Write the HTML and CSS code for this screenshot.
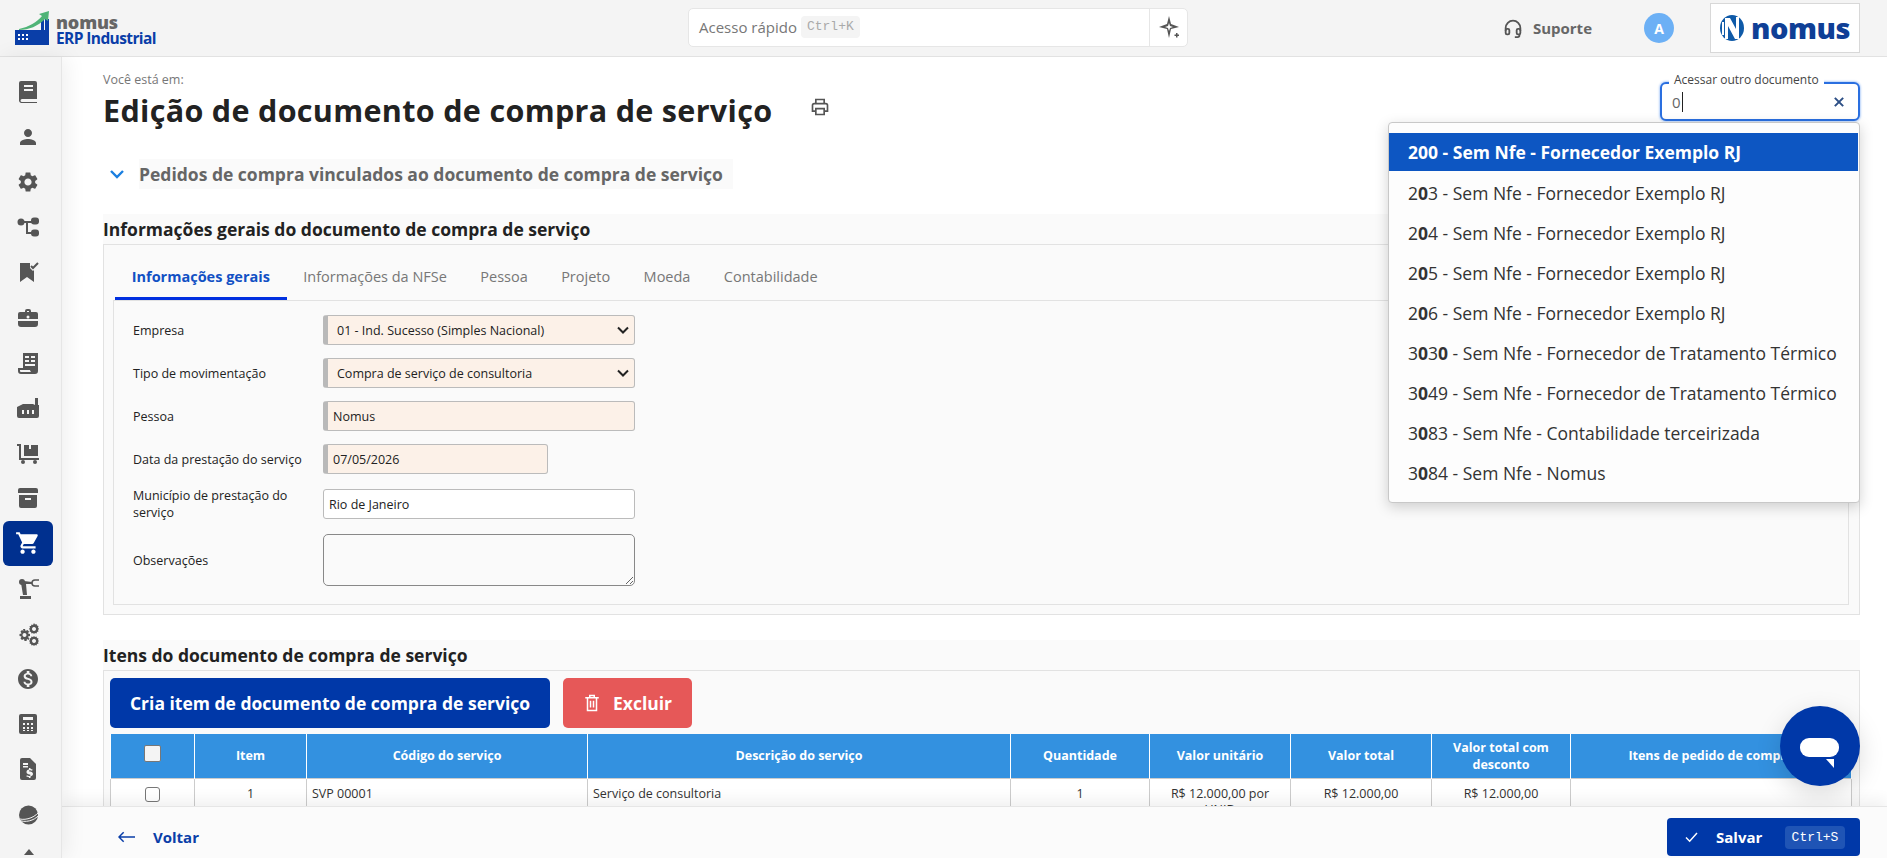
FILE: index.html
```html
<!DOCTYPE html>
<html lang="pt-BR">
<head>
  <meta charset="UTF-8" />
  <title>Edição de documento de compra de serviço</title>
  <link rel="stylesheet" href="styles.css">
</head>
<body>

  <!-- Top bar -->
  <header class="topbar">
    <div class="brand">
      <svg class="brand-mark" viewBox="0 0 34 34">
        <path fill="#0a3ea8" d="M0 19h26V8h3v11h1V8h4v26H0z"/>
        <path fill="#4fb477" d="M4 18C14 16 22 11 27 5l-3-2 10-3-1 10-3-2C23 15 14 19 4 19z"/>
        <path fill="#fff" d="M3 23h2v2H3zm4 0h2v2H7zm4 0h2v2h-2zM3 27h2v2H3zm4 0h2v2H7zm4 0h2v2h-2z"/>
      </svg>
      <div class="brand-text">
        <div class="brand-name">nomus</div>
        <div class="brand-sub">ERP Industrial</div>
      </div>
    </div>

    <div class="quick">
      <div class="quick-field">Acesso rápido <span class="kbd">Ctrl+K</span></div>
      <div class="quick-ai">
        <svg viewBox="0 0 24 24" width="24" height="24"><path fill="#555" d="M12 1l2 8 8 3-8 2-2 9-2-9-8-2 8-3z"/><path fill="#fff" d="M12 8l1 3 3 1-3 1-1 3-1-3-3-1 3-1z"/><path fill="#555" d="M19 18h1.500v1.500H22V21h-1.500v1.500H19V21h-1.500v-1.500H19z"/></svg>
      </div>
    </div>

    <div class="top-right">
      <div class="support">
        <svg viewBox="0 0 24 24" width="22" height="22" fill="none" stroke="#555" stroke-width="2"><path d="M4 15v-3a8 8 0 0 1 16 0v3"/><rect x="4" y="13" width="4" height="6" rx="1.500"/><rect x="16" y="13" width="4" height="6" rx="1.500"/><path d="M19 19v1a2 2 0 0 1-2 2h-3"/></svg>
        <span>Suporte</span>
      </div>
      <div class="avatar">A</div>
      <div class="client-logo">
        <svg viewBox="0 0 24 26" width="24" height="26">
          <ellipse cx="12" cy="13" rx="12" ry="13" fill="#0f5aa8"/>
          <path fill="#fff" d="M2 7h2v13H2zM5 3h5l6 11V2h3v22h-4L8 11v13H5z"/>
        </svg>
        <span>nomus</span>
      </div>
    </div>
  </header>

  <div class="shell">
    <!-- Side menu -->
    <nav class="sidebar">
      <a class="side-item"><svg viewBox="0 0 24 24"><path d="M5 1h14a2 2 0 0 1 2 2v16H6a1.500 1.500 0 0 0 0 3h15v1H5a3 3 0 0 1-2-2V3a2 2 0 0 1 2-2zm3 4v2h9V5zm0 4v2h9V9z" fill-rule="evenodd"/></svg></a>
      <a class="side-item"><svg viewBox="0 0 24 24"><path d="M12 12c2.200 0 4-1.800 4-4s-1.800-4-4-4-4 1.800-4 4 1.800 4 4 4zm0 2c-2.700 0-8 1.300-8 4v2h16v-2c0-2.700-5.300-4-8-4z"/></svg></a>
      <a class="side-item"><svg viewBox="0 0 24 24"><path d="M19.140 12.940c.04-.3.06-.61.06-.94 0-.32-.02-.64-.07-.94l2.030-1.580c.18-.14.23-.41.12-.61l-1.920-3.320c-.12-.22-.37-.29-.59-.22l-2.390.96c-.5-.38-1.030-.7-1.620-.94l-.36-2.540c-.04-.24-.24-.41-.48-.41h-3.840c-.24 0-.43.17-.47.41l-.36 2.540c-.59.24-1.130.57-1.620.94l-2.390-.96c-.22-.08-.47 0-.59.22L2.740 8.870c-.12.21-.08.47.12.61l2.030 1.580c-.05.3-.09.63-.09.94s.02.64.07.94l-2.030 1.580c-.18.14-.23.41-.12.61l1.920 3.320c.12.22.37.29.59.22l2.390-.96c.5.38 1.030.7 1.620.94l.36 2.540c.05.24.24.41.48.41h3.840c.24 0 .44-.17.47-.41l.36-2.540c.59-.24 1.130-.56 1.620-.94l2.390.96c.22.08.47 0 .59-.22l1.920-3.320c.12-.22.07-.47-.12-.61l-2.010-1.580zM12 15.600c-1.980 0-3.600-1.620-3.600-3.600s1.620-3.600 3.600-3.600 3.600 1.620 3.600 3.600-1.620 3.600-3.600 3.600z"/></svg></a>
      <a class="side-item"><svg viewBox="0 0 24 24"><circle cx="5" cy="7" r="3.500"/><rect x="15" y="2.500" width="8" height="7" rx="3"/><rect x="15" y="14.500" width="8" height="7" rx="3"/><path d="M8 6h8v2h-4v9h4v2h-6V8H8z"/></svg></a>
      <a class="side-item"><svg viewBox="0 0 24 24"><path d="M4 3h10v5l3 3 1-1v12l-7-5-7 5z"/><path d="M15 6l2 2 5-5" fill="none" stroke="#555" stroke-width="2"/></svg></a>
      <a class="side-item"><svg viewBox="0 0 24 24"><path fill-rule="evenodd" d="M9 6V5a2 2 0 0 1 2-2h2a2 2 0 0 1 2 2v1h5a2 2 0 0 1 2 2v5H2V8a2 2 0 0 1 2-2zm2 0h2V5h-2zM2 15h20v3a3 3 0 0 1-3 3H5a3 3 0 0 1-3-3z"/><circle cx="12" cy="11" r="1.500" fill="#f4f4f4"/></svg></a>
      <a class="side-item"><svg viewBox="0 0 24 24"><path fill-rule="evenodd" d="M7 2h15v18a3 3 0 0 1-3 3H5a3 3 0 0 1-3-3v-3h5zm2 3v2h4V5zm6 0v2h4V5zM9 9v2h4V9zm6 0v2h4V9zm-6 4v2h10v-2zM4 19v1a1 1 0 0 0 1 1h10a3 3 0 0 1-1-2z"/></svg></a>
      <a class="side-item"><svg viewBox="0 0 24 24"><path fill-rule="evenodd" d="M19 2h3v7h1v11a2 2 0 0 1-2 2H3a2 2 0 0 1-2-2V11l6-3h10l2 1zM6 14v4h2v-4zm5 0v4h2v-4zm5 0v4h2v-4z"/></svg></a>
      <a class="side-item"><svg viewBox="0 0 24 24"><path d="M1 3h4v14h18v2H3V5H1z"/><path d="M8 4h5v4h2V4h7v11H8z"/><circle cx="7" cy="21" r="2"/><circle cx="19" cy="21" r="2"/></svg></a>
      <a class="side-item"><svg viewBox="0 0 24 24"><path fill-rule="evenodd" d="M4 2h16a2 2 0 0 1 2 2v3H2V4a2 2 0 0 1 2-2zM3 9h18v11a2 2 0 0 1-2 2H5a2 2 0 0 1-2-2zm6 3v2h6v-2z"/></svg></a>
      <a class="side-item active"><svg viewBox="0 0 24 24"><path d="M7 18c-1.100 0-1.990.9-1.990 2S5.900 22 7 22s2-.9 2-2-.9-2-2-2zM1 2v2h2l3.600 7.590-1.350 2.450c-.16.28-.25.61-.25.96 0 1.100.9 2 2 2h12v-2H7.420c-.14 0-.25-.11-.25-.25l.03-.12.9-1.630h7.450c.75 0 1.410-.41 1.750-1.030l3.580-6.490c.08-.14.12-.31.12-.48 0-.55-.45-1-1-1H5.210l-.94-2H1zm16 16c-1.100 0-1.990.9-1.990 2s.89 2 1.990 2 2-.9 2-2-.9-2-2-2z"/></svg></a>
      <a class="side-item"><svg viewBox="0 0 24 24"><circle cx="6" cy="5" r="3"/><path d="M5 6l3-2 8 1v2l-6 0 1 11H7z"/><path d="M4 19h11v3H4z"/><path d="M23 3h-4a3 3 0 0 0 0 6h4" fill="none" stroke="#555" stroke-width="1.500"/></svg></a>
      <a class="side-item"><svg viewBox="0 0 24 24"><path fill-rule="evenodd" d="M7 7l2 0 .5 2 2-1 1.500 1.500-1 2 2 .5v2l-2 .5 1 2L13 18l-2-1-.5 2h-2L8 17l-2 1-1.500-1.500 1-2-2-.5v-2l2-.5-1-2L6 8l1.500 1zM8.500 11a2 2 0 1 0 .01 0z"/><path fill-rule="evenodd" d="M18 1l1 1.500 1.500-.5.5 1.500 1.500.5-.5 1.500L23 7l-1 1 .5 1.500L21 10l-.5 1.500-1.500-.5-1 1-1-1-1.500.5L15 10l-1.500-.5.5-1.500-1-1 1-1.500-.5-1.500L15 4l.5-1.500L17 3zm0 4a2 2 0 1 0 .01 0zM18 14l1 1 1.500-.5.5 1.500 1.500.5-.5 1.500 1 1-1 1 .5 1.500-1.500.5-.5 1.500-1.500-.5-1 1-1-1-1.500.5-.5-1.500-1.500-.5.5-1.500-1-1 1-1-.5-1.500 1.500-.5.5-1.500 1.500.5zm0 3a2 2 0 1 0 .01 0z"/></svg></a>
      <a class="side-item"><svg viewBox="0 0 24 24"><path d="M12 2C6.480 2 2 6.480 2 12s4.480 10 10 10 10-4.480 10-10S17.520 2 12 2zm1.410 16.090V20h-2.670v-1.930c-1.710-.36-3.160-1.460-3.270-3.400h1.960c.1 1.050.82 1.870 2.650 1.870 1.960 0 2.400-.98 2.400-1.590 0-.83-.44-1.610-2.670-2.140-2.480-.6-4.180-1.620-4.180-3.670 0-1.720 1.390-2.840 3.110-3.210V4h2.670v1.950c1.860.45 2.790 1.860 2.870 3.390H14.300c-.05-1.110-.64-1.870-2.220-1.870-1.500 0-2.400.68-2.400 1.640 0 .84.65 1.390 2.670 1.910s4.180 1.390 4.180 3.910c-.01 1.830-1.380 2.830-3.120 3.160z"/></svg></a>
      <a class="side-item"><svg viewBox="0 0 24 24"><path fill-rule="evenodd" d="M5 2h14a2 2 0 0 1 2 2v16a2 2 0 0 1-2 2H5a2 2 0 0 1-2-2V4a2 2 0 0 1 2-2zm2 3v3h10V5zm0 6v2h2v-2zm4 0v2h2v-2zm4 0v2h2v-2zm-8 4v2h2v-2zm4 0v2h2v-2zm4 0v2h2v-2zm-8 3v1h2v-1zm4 0v1h2v-1zm4 0v1h2v-1z"/></svg></a>
      <a class="side-item"><svg viewBox="0 0 24 24"><path fill-rule="evenodd" d="M6 1h8l6 6v14a2 2 0 0 1-2 2H6a2 2 0 0 1-2-2V3a2 2 0 0 1 2-2zm1 5v2h5V6zm0 3v1.500h5V9zm6 2v1.500c-1.500.3-2.500 1.200-2.500 2.500 0 2.800 4 2 4 3.200 0 1-2.500 1-3.500 0l-.8 1c.6.5 1.300.8 2.800 1V21h1.500v-1.500c1.500-.3 2.500-1.200 2.500-2.400 0-2.900-4-2-4-3.300 0-.8 2-.9 3-.1l.7-1c-.5-.4-1.200-.7-2.200-.8V11z"/></svg></a>
      <a class="side-item"><svg viewBox="0 0 24 24"><circle cx="12.500" cy="12" r="9.500"/><path d="M1 15c6 3 16 1 22-6M2 17c7 3 16 1 21-5" fill="none" stroke="#f4f4f4" stroke-width="1"/></svg></a>
      <div class="side-more"></div>
    </nav>

    <div class="main">
      <div class="content">
        <div class="crumb">Você está em:</div>
        <div class="title-row">
          <h1>Edição de documento de compra de serviço</h1>
          <svg viewBox="0 0 24 24" width="20" height="20" fill="none" stroke="#555" stroke-width="2"><path d="M7 8V3h10v5"/><path d="M7 17H3v-7a2 2 0 0 1 2-2h14a2 2 0 0 1 2 2v7h-4"/><path d="M7 14h10v7H7z"/></svg>
        </div>

        <div class="linked">
          <svg viewBox="0 0 14 10" width="14" height="10" fill="none" stroke="#1a7fe0" stroke-width="2.400"><path d="M1 2l6 6 6-6"/></svg>
          <div class="linked-title">Pedidos de compra vinculados ao documento de compra de serviço</div>
        </div>

        <h2 class="section-title first">Informações gerais do documento de compra de serviço</h2>
        <section class="panel">
          <div class="tabs">
            <a class="tab active">Informações gerais</a>
            <a class="tab">Informações da NFSe</a>
            <a class="tab">Pessoa</a>
            <a class="tab">Projeto</a>
            <a class="tab">Moeda</a>
            <a class="tab">Contabilidade</a>
          </div>
          <div class="form">
            <label>Empresa</label>
            <select class="req"><option>01 - Ind. Sucesso (Simples Nacional)</option></select>
            <label>Tipo de movimentação</label>
            <select class="req"><option>Compra de serviço de consultoria</option></select>
            <label>Pessoa</label>
            <input class="req" type="text" value="Nomus">
            <label>Data da prestação do serviço</label>
            <input class="req short" type="text" value="07/05/2026">
            <label>Município de prestação do serviço</label>
            <input type="text" value="Rio de Janeiro">
            <label>Observações</label>
            <textarea></textarea>
          </div>
        </section>

        <h2 class="section-title">Itens do documento de compra de serviço</h2>
        <section class="panel items">
          <div class="actions">
            <button class="btn btn-primary">Cria item de documento de compra de serviço</button>
            <button class="btn btn-danger">
              <svg viewBox="0 0 24 24" width="18" height="18" fill="none" stroke="#fff" stroke-width="2"><path d="M3 5h18M9 5V2h6v3M6 5v17h12V5M10 9v9M14 9v9"/></svg>
              Excluir
            </button>
          </div>
          <table class="grid">
            <colgroup>
              <col class="c1"><col class="c2"><col class="c3"><col class="c4"><col class="c5"><col class="c6"><col class="c7"><col class="c8"><col class="c9">
            </colgroup>
            <thead>
              <tr>
                <th><input type="checkbox" class="check check-head"></th>
                <th>Item</th>
                <th>Código do serviço</th>
                <th>Descrição do serviço</th>
                <th>Quantidade</th>
                <th>Valor unitário</th>
                <th>Valor total</th>
                <th>Valor total com desconto</th>
                <th>Itens de pedido de compra</th>
              </tr>
            </thead>
            <tbody>
              <tr>
                <td class="center"><input type="checkbox" class="check"></td>
                <td class="center">1</td>
                <td>SVP 00001</td>
                <td>Serviço de consultoria</td>
                <td class="center">1</td>
                <td class="center">R$ 12.000,00 por UNID</td>
                <td class="center">R$ 12.000,00</td>
                <td class="center">R$ 12.000,00</td>
                <td></td>
              </tr>
            </tbody>
          </table>
        </section>

        <!-- Document search with open suggestion list -->
        <div class="doc-search">
          <span class="doc-legend">Acessar outro documento</span>
          <span class="doc-value">0</span>
          <svg viewBox="0 0 12 12" width="10" height="10" fill="none" stroke="#2d4f86" stroke-width="2.400"><path d="M1 1l10 10M11 1L1 11"/></svg>
        </div>
        <ul class="suggest">
          <li class="current">200 - Sem Nfe - Fornecedor Exemplo RJ</li>
          <li>2<b>0</b>3 - Sem Nfe - Fornecedor Exemplo RJ</li>
          <li>2<b>0</b>4 - Sem Nfe - Fornecedor Exemplo RJ</li>
          <li>2<b>0</b>5 - Sem Nfe - Fornecedor Exemplo RJ</li>
          <li>2<b>0</b>6 - Sem Nfe - Fornecedor Exemplo RJ</li>
          <li>3<b>0</b>3<b>0</b> - Sem Nfe - Fornecedor de Tratamento Térmico</li>
          <li>3<b>0</b>49 - Sem Nfe - Fornecedor de Tratamento Térmico</li>
          <li>3<b>0</b>83 - Sem Nfe - Contabilidade terceirizada</li>
          <li>3<b>0</b>84 - Sem Nfe - Nomus</li>
        </ul>
      </div>

      <footer class="footer">
        <a class="back">
          <svg viewBox="0 0 18 12" width="17" height="12" fill="none" stroke="#0a3ea8" stroke-width="1.600"><path d="M18 6H1M6 1L1 6l5 5"/></svg>
          Voltar
        </a>
        <button class="btn-save">
          <svg viewBox="0 0 14 12" width="13" height="11" fill="none" stroke="#fff" stroke-width="1.600"><path d="M1 6l4 4 8-9"/></svg>
          <span>Salvar</span>
          <span class="kbd-save">Ctrl+S</span>
        </button>
      </footer>
    </div>
  </div>

  <!-- Chat bubble -->
  <div class="chat">
    <svg viewBox="0 0 40 30" width="40" height="30"><rect x="0" y="0" width="39" height="19" rx="9" fill="#fff"/><path d="M26 21h8v9z" fill="#fff"/></svg>
  </div>

</body>
</html>
```

FILE: styles.css
```css
* {
  box-sizing: border-box;
}

html, body {
  margin: 0;
  height: 100%;
  overflow: hidden;
}

body {
  display: flex;
  flex-direction: column;
  font-family: "Open Sans", "Noto Sans", sans-serif;
  color: #222;
  background: #fff;
}

/* top bar */
.topbar {
  height: 57px;
  flex: none;
  display: flex;
  align-items: center;
  justify-content: space-between;
  background: #f4f4f4;
  border-bottom: 1px solid #e2e2e2;
  padding: 0 27px 0 15px;
  position: relative;
}

.brand {
  display: flex;
  align-items: center;
  gap: 7px;
  width: 673px;
}

.brand-mark {
  width: 34px;
  height: 34px;
}

.brand-text {
  line-height: 16px;
  margin-top: 3px;
}

.brand-name {
  font-size: 18px;
  font-weight: 800;
  color: #666;
  letter-spacing: -0.2px;
}

.brand-sub {
  font-size: 15.5px;
  font-weight: 700;
  color: #0a3ea8;
  letter-spacing: -0.6px;
}

.quick {
  width: 500px;
  height: 39px;
  margin-top: -2px;
  display: flex;
  background: #fff;
  border: 1px solid #e6e6e6;
  border-radius: 5px;
}

.quick-field {
  flex: 1;
  display: flex;
  align-items: center;
  gap: 4px;
  padding-left: 10px;
  font-size: 15px;
  color: #777;
}

.kbd {
  font-family: "Liberation Mono", monospace;
  font-size: 13px;
  color: #aaa;
  background: #f4f4f4;
  border-radius: 4px;
  padding: 3px 6px;
  line-height: 16px;
}

.quick-ai {
  width: 38px;
  display: flex;
  align-items: center;
  justify-content: center;
  border-left: 1px solid #e6e6e6;
}

.top-right {
  display: flex;
  align-items: center;
  margin-left: auto;
}

.support {
  display: flex;
  align-items: center;
  gap: 9px;
  font-size: 15px;
  font-weight: 700;
  color: #666;
}

.avatar {
  width: 30px;
  height: 30px;
  margin: 0 36px 0 52px;
  border-radius: 50%;
  background: #6cb0f5;
  color: #fff;
  font-size: 14px;
  font-weight: 700;
  display: flex;
  align-items: center;
  justify-content: center;
}

.client-logo {
  width: 150px;
  height: 50px;
  background: #fff;
  border: 1px solid #d8d8d8;
  display: flex;
  align-items: center;
  justify-content: center;
  gap: 7px;
}

.client-logo span {
  font-size: 29px;
  font-weight: 800;
  color: #0f3f96;
  letter-spacing: -0.5px;
  line-height: 30px;
}

/* page shell */
.shell {
  flex: 1;
  display: flex;
  min-height: 0;
}

.sidebar {
  width: 62px;
  flex: none;
  background: #f4f4f4;
  border-right: 1px solid #e6e6e6;
  box-shadow: 4px 0 22px rgba(0, 0, 0, 0.07);
  padding: 12px 0 0 3px;
  position: relative;
  z-index: 2;
}

.side-item {
  width: 50px;
  height: 45.2px;
  display: flex;
  align-items: center;
  justify-content: center;
  border-radius: 6px;
}

.side-item svg {
  width: 24px;
  height: 24px;
  fill: #555;
}

.side-item.active {
  background: #00308f;
}

.side-item.active svg {
  width: 26px;
  height: 26px;
  fill: #fff;
}

.side-more {
  width: 0;
  height: 0;
  margin: 12px 0 0 21px;
  border: 5px solid transparent;
  border-top: 0;
  border-bottom: 6px solid #555;
}

.main {
  flex: 1;
  min-width: 0;
  display: flex;
  flex-direction: column;
}

.content {
  flex: 1;
  min-height: 0;
  overflow: hidden;
  position: relative;
  padding: 15px 27px 0 41px;
}

.crumb {
  font-size: 12.5px;
  line-height: 16px;
  color: #777;
}

.title-row {
  display: flex;
  align-items: center;
  gap: 38px;
  margin-top: 3px;
  height: 38px;
}

.title-row svg {
  margin: -6px 0 0 0;
}

h1 {
  margin: 0;
  font-size: 30.5px;
  font-weight: 700;
  color: #222;
  letter-spacing: 0.32px;
}

.linked {
  display: flex;
  align-items: center;
  gap: 15px;
  margin: 30px 0 0 7px;
  height: 30px;
}

.linked-title {
  height: 30px;
  line-height: 30px;
  padding: 0 10px 0 0;
  background: #fafafa;
  font-size: 17.5px;
  font-weight: 700;
  color: #666;
}

.section-title {
  margin: 25px 0 0;
  height: 30px;
  line-height: 30px;
  background: #fafafa;
  font-size: 17.5px;
  font-weight: 700;
  color: #222;
}

.panel {
  background: #fafafa;
  border: 1px solid #e2e2e2;
  padding: 9px 10px 9px 9px;
}

.tabs {
  display: flex;
  height: 46px;
  padding-left: 2px;
}

.tab {
  padding: 0 16.700px;
  line-height: 46px;
  height: 46px;
  font-size: 14.500px;
  color: #777;
  border-bottom: 3px solid transparent;
}

.tab.active {
  font-weight: 700;
  color: #1150c4;
  border-bottom-color: #0030e0;
}

.form {
  display: grid;
  grid-template-columns: 190px 312px;
  align-items: center;
  align-content: start;
  row-gap: 13px;
  height: 305px;
  padding: 14px 0 0 19px;
  border: 1px solid #e2e2e2;
}

.form label {
  font-size: 12.5px;
  line-height: 17px;
  color: #222;
}

.form select,
.form input,
.form textarea {
  font-family: "Open Sans", sans-serif;
  font-size: 12.5px;
  color: #222;
  height: 30px;
  width: 100%;
  margin: 0;
  padding: 0 5px;
  background-color: #fff;
  border: 1px solid #bbb;
  border-radius: 3px;
  outline: none;
}

.form .req {
  background-color: #fcf1e8;
  border-left: 5px solid #b9b9b9;
}

.form select.req {
  appearance: none;
  padding-left: 9px;
  background-image: url("data:image/svg+xml,%3Csvg xmlns='http://www.w3.org/2000/svg' viewBox='0 0 12 8'%3E%3Cpath d='M1 1.500l5 5 5-5' fill='none' stroke='%23222' stroke-width='2'/%3E%3C/svg%3E");
  background-repeat: no-repeat;
  background-position: right 5px center;
  background-size: 12px 8px;
}

.form .short {
  width: 225px;
}

.form textarea {
  height: 52px;
  border-color: #888;
  border-radius: 5px;
  background: #fafafa;
}

.items {
  height: 200px;
  padding: 7px 7px 0 6px;
}

.actions {
  display: flex;
  gap: 13px;
  height: 50px;
}

.btn {
  display: flex;
  align-items: center;
  justify-content: center;
  gap: 12px;
  border: none;
  border-radius: 5px;
  color: #fff;
  font-family: "Open Sans", sans-serif;
  font-size: 17.5px;
  font-weight: 700;
}

.btn-primary {
  width: 440px;
  background: #0038a8;
}

.btn-danger {
  width: 129px;
  background: #e65858;
}

.grid {
  width: 1741px;
  margin: 6px 0 0 0;
  table-layout: fixed;
  border-collapse: collapse;
  font-size: 12.5px;
  background: #fff;
}

.c1 { width: 84px; }
.c2 { width: 112px; }
.c3 { width: 281px; }
.c4 { width: 423px; }
.c5 { width: 139px; }
.c6 { width: 141px; }
.c7 { width: 141px; }
.c8 { width: 139px; }
.c9 { width: 281px; }

.grid th {
  height: 44px;
  padding: 0 8px;
  background: #3391e0;
  color: #fff;
  font-size: 12.5px;
  line-height: 17px;
  font-weight: 700;
  border-left: 1px solid #fff;
  border-right: 1px solid #fff;
}

.grid td {
  height: 30px;
  padding: 7px 5px 0;
  line-height: 16px;
  vertical-align: top;
  color: #333;
  border: 1px solid #ccc;
}

.grid td.center {
  padding-left: 12px;
  padding-right: 12px;
  text-align: center;
}

.check {
  width: 15px;
  height: 15px;
  margin: 0;
  appearance: none;
  background: #fff;
  border: 1px solid #777;
  border-radius: 3px;
  vertical-align: middle;
}

.check-head {
  width: 17px;
  height: 17px;
  background: #f4f4f4;
  border-radius: 2px;
  margin-bottom: 5px;
}

/* document search */
.doc-search {
  position: absolute;
  left: 1598px;
  top: 25px;
  width: 200px;
  height: 39px;
  display: flex;
  align-items: center;
  justify-content: space-between;
  padding: 0 14px 0 10px;
  background: #fff;
  border: 2px solid #2a6fe0;
  border-radius: 6px;
  box-shadow: 0 0 2px 1px #b9d3fa;
}

.doc-legend {
  position: absolute;
  left: 7px;
  top: -13px;
  padding: 0 5px;
  background: #fff;
  font-size: 12px;
  line-height: 18px;
  color: #444;
}

.doc-value {
  font-size: 15px;
  color: #666;
  padding-right: 1px;
  border-right: 1px solid #222;
  line-height: 20px;
  margin-right: auto;
}

.suggest {
  position: absolute;
  left: 1326px;
  top: 65px;
  width: 472px;
  height: 381px;
  margin: 0;
  padding: 10px 1px 0 0;
  list-style: none;
  background: #fdfdfd;
  border: 1px solid #c8c8c8;
  border-radius: 4px;
  box-shadow: 0 4px 14px rgba(0, 0, 0, 0.18);
  font-size: 17.5px;
  font-weight: 400;
  color: #333;
}

.suggest li {
  height: 40px;
  line-height: 40px;
  padding-left: 19px;
  white-space: nowrap;
}

.suggest li.current {
  height: 38px;
  line-height: 38px;
  margin-bottom: 2px;
  background: #0d56c2;
  color: #fff;
  font-weight: 700;
}

/* footer */
.footer {
  height: 52px;
  flex: none;
  display: flex;
  align-items: center;
  justify-content: space-between;
  padding: 9px 27px 0 56px;
  background: #fbfbfb;
  border-top: 1px solid #e6e6e6;
  box-shadow: 0 -6px 14px rgba(0, 0, 0, 0.06);
  position: relative;
  z-index: 1;
}

.back {
  display: flex;
  align-items: center;
  gap: 18px;
  font-size: 15px;
  font-weight: 700;
  color: #0a3ea8;
}

.btn-save {
  width: 193px;
  height: 38px;
  display: flex;
  align-items: center;
  padding: 0 15px 0 18px;
  border: none;
  border-radius: 4px;
  background: #0038a8;
  color: #fff;
  font-family: "Open Sans", sans-serif;
  font-size: 15px;
  font-weight: 700;
}

.btn-save span:first-of-type {
  margin-left: 18px;
}

.kbd-save {
  margin-left: auto;
  width: 60px;
  height: 23px;
  line-height: 23px;
  text-align: center;
  background: #1f54b5;
  border-radius: 4px;
  font-family: "Liberation Mono", monospace;
  font-size: 13px;
  font-weight: 400;
}

/* chat */
.chat {
  position: fixed;
  left: 1780px;
  top: 706px;
  width: 80px;
  height: 80px;
  border-radius: 50%;
  background: #0038a8;
  box-shadow: 0 8px 26px rgba(0, 0, 0, 0.15);
  display: flex;
  align-items: center;
  justify-content: center;
  z-index: 5;
  padding-top: 14px;
}
```
